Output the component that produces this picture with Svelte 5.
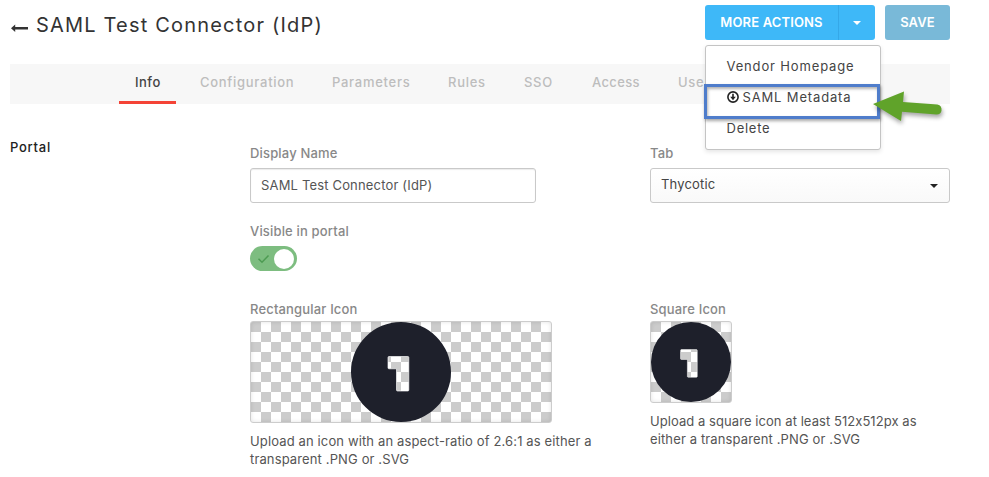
<script>
  const tabs = ['Info', 'Configuration', 'Parameters', 'Rules', 'SSO', 'Access', 'Users'];
  let active = $state('Info');
</script>

{#snippet logo(size)}
  <svg class="logo" width={size} height={size} viewBox="0 0 100 100">
    <path fill="#1e202b" stroke="none" fill-rule="evenodd" d="M50 0a50 50 0 1 1 0 100a50 50 0 1 1 0-100ZM38 34.500h18.800q1 0 1 1v32.500q0 1-1 1h-10.300q-1 0-1-1V46.800H38q-1 0-1-1V35.500q0-1 1-1Z" />
    <path fill="none" stroke="#fff" stroke-opacity=".65" stroke-width="1" d="M38 34.500h18.800q1 0 1 1v32.500q0 1-1 1h-10.300q-1 0-1-1V46.800H38q-1 0-1-1V35.500q0-1 1-1Z" />
  </svg>
{/snippet}

<div class="page">
  <header>
    <svg class="back" width="18" height="10" viewBox="0 0 18 10"><path d="M1 5.300 5.200 1.500V4.100H18v2.400H5.200V9Z" fill="#333" /></svg>
    <h1>SAML Test Connector (IdP)</h1>
    <div class="actions">
      <button class="more"><span class="more-label">MORE ACTIONS</span><span class="split"><i class="caret"></i></span></button>
      <button class="save">SAVE</button>
      <div class="menu">
        <div class="item vendor">Vendor Homepage</div>
        <div class="item meta">
          <svg width="12" height="12" viewBox="0 0 12 12"><circle cx="6" cy="6" r="5.100" fill="none" stroke="#222" stroke-width="1.600" /><path d="M5.200 2.800h1.600v3H8.800L6 9.200 3.200 5.800h2Z" fill="#222" /></svg>
          <span>SAML Metadata</span>
        </div>
        <div class="item delete">Delete</div>
        <div class="highlight"></div>
        <svg class="pointer" width="78" height="44" viewBox="0 0 78 44"><path d="M3 19 34 6.500 33 17 67.500 19.500Q72 20.500 71.500 25.500 71 29.500 66.500 29.500L32 26.800 31 36Z" fill="#60a32a" /></svg>
      </div>
    </div>
  </header>

  <nav>
    {#each tabs as tab}
      <button class="tab {tab.toLowerCase()}" class:active={tab === active} onclick={() => (active = tab)}>{tab}</button>
    {/each}
  </nav>

  <main>
    <h2>Portal</h2>
    <section class="left">
      <div class="label l-name">Display Name</div>
      <div class="field input">SAML Test Connector (IdP)</div>
      <div class="label l-visible">Visible in portal</div>
      <div class="toggle">
        <svg width="13" height="10" viewBox="0 0 13 10"><path d="m1.500 4.800 3.500 3.400 6.500-6.700" fill="none" stroke="#4d9b52" stroke-width="1.500" /></svg>
        <span class="knob"></span>
      </div>
      <div class="label l-rect">Rectangular Icon</div>
      <div class="checker rect">{@render logo(100)}</div>
      <p>Upload an icon with an aspect-ratio of 2.6:1 as either a<br />transparent .PNG or .SVG</p>
    </section>
    <section class="right">
      <div class="label l-tab">Tab</div>
      <div class="field select"><span>Thycotic</span><i class="caret"></i></div>
      <div class="label l-square">Square Icon</div>
      <div class="checker square">{@render logo(80)}</div>
      <p><span class="size-hint">Upload a square icon at least 512x512px as</span><br />either a transparent .PNG or .SVG</p>
    </section>
  </main>
</div>

<style>
  :global(body) { margin: 0; background: #fff; overflow: hidden; }
  .page { width: 940px; height: 477px; padding-left: 10px; font: 13px/18px Inter, sans-serif; color: #555; letter-spacing: .17px; }
  button { border: 0; padding: 0; background: none; font: inherit; letter-spacing: inherit; }
  svg { display: block; flex: none; }
  header { height: 64px; display: flex; align-items: flex-start; }
  .back { margin-top: 23px; }
  h1 { margin: 10px 0 0 8px; font-size: 20px; line-height: 30px; font-weight: 400; color: #333; letter-spacing: 1.19px; white-space: nowrap; }
  .actions { position: relative; display: flex; gap: 10px; margin: 5px 0 0 auto; }
  .more, .save { height: 35px; border-radius: 3px; color: #fff; font-weight: 600; background: #3eb8f8; letter-spacing: .15px; }
  .more { width: 170px; display: flex; align-items: center; }
  .more-label { width: 133px; text-align: center; padding-bottom: 1px; }
  .split { width: 36px; height: 35px; display: flex; align-items: center; justify-content: center; border-left: 1px solid #35a8e8; }
  .save { width: 65px; background: #79b9d8; padding-bottom: 1px; }
  .caret { width: 0; height: 0; border: 4px solid transparent; border-top-color: currentColor; border-bottom: 0; }
  .menu { position: absolute; z-index: 2; left: 0; top: 40px; box-sizing: border-box; width: 176px; height: 105px; padding-top: 4px; background: #fff; border: 1px solid #c4c4c4; border-radius: 3px; box-shadow: 0 2px 4px rgba(0,0,0,.1); color: #444; letter-spacing: .85px; white-space: nowrap; }
  .item { height: 31px; display: flex; align-items: center; padding-left: 20.500px; gap: 4px; }
  .delete { letter-spacing: .75px; }
  .highlight { position: absolute; left: -2px; top: 38px; box-sizing: border-box; width: 176px; height: 35px; border: 3px solid #4f7dcb; box-shadow: 1px 2px 3px rgba(0,0,0,.35), inset 1px 2px 3px rgba(0,0,0,.3); }
  .pointer { position: absolute; left: 164px; top: 39px; filter: drop-shadow(1px 3px 2px rgba(0,0,0,.35)); }
  nav { display: flex; gap: 8px; box-sizing: border-box; height: 40px; padding-left: 109px; background: #f7f7f7; overflow: hidden; letter-spacing: .72px; }
  .tab { height: 40px; padding: 0 0 1px 16px; border-bottom: 3px solid transparent; color: #bdbdbd; font-weight: 500; text-align: left; box-sizing: border-box; flex: none; }
  .tab.active { color: #444; border-bottom-color: #f44336; }
  .info { width: 57px; letter-spacing: .5px; }
  .configuration { width: 124px; }
  .parameters { width: 108px; }
  .rules { width: 68px; }
  .sso { width: 60px; }
  .access { width: 78px; letter-spacing: .35px; }
  .users { width: 72px; }
  main { display: flex; padding-top: 34px; }
  h2 { width: 240px; margin: 0; font: inherit; font-weight: 500; color: #222; letter-spacing: .75px; }
  section { margin-top: 6px; }
  .left { width: 400px; }
  .right { width: 300px; }
  .label { color: #888; font-weight: 500; height: 18px; }
  .field { box-sizing: border-box; height: 35px; margin-top: 6px; border: 1px solid #c9c9c9; border-radius: 3px; padding: 0 10px; display: flex; align-items: center; }
  .input { width: 286px; padding-bottom: 1px; box-shadow: inset 0 1px 1px rgba(0,0,0,.08); }
  .select { width: 300px; justify-content: space-between; background: linear-gradient(#fff, #f9f9f9); color: #444; }
  .select span { padding-bottom: 3px; }
  .select .caret { color: #222; margin-right: 1px; }
  .l-visible { margin-top: 19px; }
  .toggle { box-sizing: border-box; margin-top: 6px; width: 47px; height: 25px; border-radius: 13px; background: #7dbd80; display: flex; align-items: center; justify-content: space-between; padding: 0 3px 0 7px; }
  .knob { width: 20px; height: 20px; border-radius: 50%; background: #fff; }
  .l-rect { margin-top: 29px; }
  .l-square { margin-top: 97px; }
  .checker { border: 1px solid #ccc; border-radius: 3px; margin-top: 3px; display: flex; justify-content: center; background: conic-gradient(#fff 0 25%, #ccc 0 50%, #fff 0 75%, #ccc 0) 0 0 / 20px 20px; box-shadow: inset 0 0 4px rgba(0,0,0,.12); }
  .rect { width: 300px; height: 100px; }
  .square { width: 80px; height: 80px; }
  p { margin: 9px 0 0; white-space: nowrap; letter-spacing: .13px; }
  .size-hint { letter-spacing: .06px; }
</style>
